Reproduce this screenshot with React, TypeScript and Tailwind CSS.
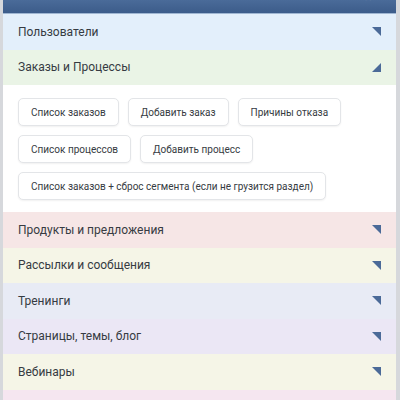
import React from 'react';

const sections = [
  { label: 'Пользователи', bg: 'bg-[#e3effb]', open: false },
  { label: 'Заказы и Процессы', bg: 'bg-[#eaf4e6]', open: true },
  { label: 'Продукты и предложения', bg: 'bg-[#f6e6e6]', open: false },
  { label: 'Рассылки и сообщения', bg: 'bg-[#f5f5e7]', open: false },
  { label: 'Тренинги', bg: 'bg-[#e8ebf5]', open: false },
  { label: 'Страницы, темы, блог', bg: 'bg-[#ebe7f5]', open: false },
  { label: 'Вебинары', bg: 'bg-[#f5f5e7]', open: false },
  { label: 'Ещё', bg: 'bg-[#f5e6f0]', open: false },
];

const buttons = [
  ['Список заказов', 'Добавить заказ', 'Причины отказа'],
  ['Список процессов', 'Добавить процесс'],
  ['Список заказов + сброс сегмента (если не грузится раздел)'],
];

const Corner: React.FC<{ open: boolean }> = ({ open }) => (
  <svg width="9" height="9" viewBox="0 0 9 9" className="shrink-0">
    {open ? <polygon points="9,0 9,9 0,9" fill="#4b6a98" /> : <polygon points="0,0 9,0 9,9" fill="#4b6a98" />}
  </svg>
);

export default function App() {
  return (
    <div className="w-[400px] h-[400px] overflow-hidden bg-[#d6d8dc] pl-[3px] pr-[4px]" style={{ fontFamily: 'Roboto, "Open Sans", sans-serif' }}>
      <div className="h-full bg-white flex flex-col">
        <div className="h-[14px] shrink-0 bg-gradient-to-b from-[#4a6b99] to-[#3c5c8a] border-b border-[#9fb6d2] flex justify-end pr-[24px]">
          <span className="text-white text-[10px] leading-none -mt-[7px] opacity-80">✕</span>
        </div>
        {sections.map((s) => (
          <div key={s.label}>
            <div className={`${s.bg} h-[35.5px] flex items-center justify-between pl-[15px] pr-[15px] text-[12px] text-[#363b42]`}>
              <span>{s.label}</span>
              <Corner open={s.open} />
            </div>
            {s.open && (
              <div className="bg-white px-[15px] pt-[13px] pb-[12px] flex flex-col gap-[9px]">
                {buttons.map((row, i) => (
                  <div key={i} className="flex gap-[9px]">
                    {row.map((b) => (
                      <div
                        key={b}
                        className="h-[28px] px-[12px] flex items-center rounded-[5px] border border-[#e3e5e8] bg-white shadow-[0_1px_2px_rgba(0,0,0,0.06)] text-[10px] text-[#363b42]"
                      >
                        {b}
                      </div>
                    ))}
                  </div>
                ))}
              </div>
            )}
          </div>
        ))}
      </div>
    </div>
  );
}
